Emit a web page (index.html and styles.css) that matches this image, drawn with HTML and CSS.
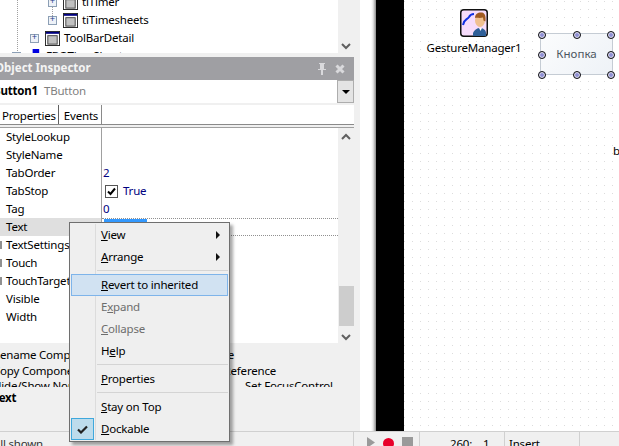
FILE: index.html
```html
<!DOCTYPE html>
<html lang="en">
<head>
<meta charset="utf-8">
<title>Object Inspector</title>
<link rel="stylesheet" href="styles.css">
</head>
<body>
<div class="app">
  <div class="workspace">
    <aside class="left">
      <section class="tree-pane">
        <div class="tree">
          <span class="guide guide-a"></span>
          <span class="guide guide-b"></span>
          <div class="tree-row lvl3"><span class="exp">+</span><svg class="win" viewBox="0 0 16 16"><use href="#win"/></svg><span>tiTimer</span></div>
          <div class="tree-row lvl3"><span class="exp">+</span><svg class="win" viewBox="0 0 16 16"><use href="#win"/></svg><span>tiTimesheets</span></div>
          <div class="tree-row lvl2"><span class="exp">+</span><svg class="win" viewBox="0 0 16 16"><use href="#win"/></svg><span>ToolBarDetail</span></div>
          <div class="tree-row lvl1"><span class="exp">-</span><svg class="win" viewBox="0 0 16 16"><rect x="6" y="0" width="7" height="8" fill="#0000e0"/><rect x="3" y="8" width="12" height="7" fill="#808080"/></svg><span>FBOTimeSheet</span></div>
        </div>
        <div class="scroll">
          <span class="spacer"></span>
          <svg class="chev" viewBox="0 0 10 7"><path d="M1 1l4 4 4-4" fill="none" stroke="#606060" stroke-width="2"/></svg>
        </div>
      </section>

      <header class="title">
        <span class="title-text">Object Inspector</span>
        <svg class="pin" viewBox="0 0 10 12"><path d="M2 0h6v1H7v5h2v1H6v5H4V7H1V6h2V1H2z" fill="#d9d9dc"/></svg>
        <svg class="close" viewBox="0 0 10 10"><path d="M1.5 1.5l7 7M8.5 1.5l-7 7" stroke="#d9d9dc" stroke-width="3"/></svg>
      </header>

      <div class="combo">
        <span class="combo-name">Button1</span>
        <span class="combo-type">TButton</span>
        <span class="combo-btn"><i class="tri"></i></span>
      </div>

      <nav class="tabs">
        <span class="tab active">Properties</span>
        <span class="tab">Events</span>
      </nav>

      <section class="grid">
        <div class="props">
          <div class="prop"><span class="name">StyleLookup</span><span class="value"></span></div>
          <div class="prop"><span class="name">StyleName</span><span class="value"></span></div>
          <div class="prop"><span class="name">TabOrder</span><span class="value">2</span></div>
          <div class="prop"><span class="name">TabStop</span><span class="value"><i class="check"><svg viewBox="0 0 11 11"><path d="M2 5.5l2.5 2.5L9 2.5" fill="none" stroke="#000" stroke-width="2"/></svg></i>True</span></div>
          <div class="prop"><span class="name">Tag</span><span class="value">0</span></div>
          <div class="prop current"><span class="name">Text</span><span class="value"><i class="sel">Button1</i></span></div>
          <div class="prop more"><span class="name">TextSettings</span><span class="value"></span></div>
          <div class="prop more"><span class="name">Touch</span><span class="value"></span></div>
          <div class="prop more"><span class="name">TouchTargetExpansion</span><span class="value"></span></div>
          <div class="prop"><span class="name">Visible</span><span class="value"></span></div>
          <div class="prop"><span class="name">Width</span><span class="value"></span></div>
        </div>
        <div class="scroll grid-scroll">
          <svg class="chev" viewBox="0 0 10 7"><path d="M1 6l4-4 4 4" fill="none" stroke="#606060" stroke-width="2"/></svg>
          <span class="spacer"></span>
          <span class="thumb"></span>
          <svg class="chev chev-down" viewBox="0 0 10 7"><path d="M1 1l4 4 4-4" fill="none" stroke="#606060" stroke-width="2"/></svg>
        </div>
      </section>

      <section class="verbs">
        <div class="verb-row"><span class="verb-a">Rename Component</span><span class="verb-b">Edit Custom Style</span></div>
        <div class="verb-row"><span class="verb-a">Copy Component</span><span class="verb-c">Add Component Reference</span></div>
        <div class="verb-row verb-last"><span class="verb-a">Hide/Show Nonvisual</span><span class="verb-d">Set FocusControl</span></div>
        <div class="verb-prop">Text</div>
      </section>
    </aside>

    <main class="designer">
      <div class="shade"></div>
      <div class="black"></div>
      <div class="form">
        <div class="comp">
          <svg class="comp-icon" viewBox="0 0 28 28">
            <rect x="0.75" y="0.75" width="26.5" height="26.5" rx="3" fill="#f6dcfb" stroke="#111" stroke-width="1.5"/>
            <path d="M3 16c1-6 4-5 6-8 1-2 3-3 5-3" fill="none" stroke="#1030e0" stroke-width="2"/>
            <path d="M13 27v-3c1-3 4-5 7-5s6 2 6 5v3z" fill="#2f5f98"/>
            <path d="M19 19l1.500 3 1.500-3z" fill="#fff"/>
            <ellipse cx="20" cy="11.500" rx="5" ry="6.500" fill="#f0c090"/>
            <path d="M15 9c0-5 4-6 7-5.500s4 4 3.500 9l-2-1-.5-3c-3 1-6 0-8 .5z" fill="#a05a20"/>
          </svg>
          <span class="comp-label">GestureManager1</span>
        </div>
        <div class="btn">Кнопка
          <i class="h h1"></i><i class="h h2"></i><i class="h h3"></i><i class="h h4"></i>
          <i class="h h5"></i><i class="h h6"></i><i class="h h7"></i><i class="h h8"></i>
        </div>
        <span class="edge-b">b</span>
      </div>
    </main>
  </div>

  <footer class="status">
    <div class="st st-shown">All shown</div>
    <div class="st st-run">
      <svg class="run" viewBox="0 0 8 11"><path d="M0 0l8 5.500L0 11z" fill="#9a9a9a"/></svg>
      <svg class="rec" viewBox="0 0 11 11"><circle cx="5.500" cy="5.500" r="5.500" fill="#e8002a"/></svg>
      <i class="stop"></i>
    </div>
    <div class="st st-pos"><span>260:</span><span>1</span></div>
    <div class="st st-mode">Insert</div>
    <div class="st st-end"></div>
  </footer>
</div>

<div class="menu">
  <div class="mi"><span class="ml"><u>V</u>iew</span><i class="arrow"></i></div>
  <div class="mi"><span class="ml"><u>A</u>rrange</span><i class="arrow"></i></div>
  <div class="ms"></div>
  <div class="mi hot"><span class="ml"><u>R</u>evert to inherited</span></div>
  <div class="mi off"><span class="ml">E<u>x</u>pand</span></div>
  <div class="mi off"><span class="ml"><u>C</u>ollapse</span></div>
  <div class="mi"><span class="ml">H<u>e</u>lp</span></div>
  <div class="ms"></div>
  <div class="mi"><span class="ml"><u>P</u>roperties</span></div>
  <div class="ms"></div>
  <div class="mi"><span class="ml"><u>S</u>tay on Top</span></div>
  <div class="mi"><span class="tick"><svg viewBox="0 0 11 9"><path d="M1 4.500l3 3 6-6" fill="none" stroke="#222" stroke-width="2.200"/></svg></span><span class="ml"><u>D</u>ockable</span></div>
</div>

<svg class="defs" width="0" height="0">
  <defs>
    <g id="win">
      <rect x="0.500" y="0.500" width="15" height="15" fill="#fff" stroke="#222"/>
      <rect x="1" y="1" width="14" height="2" fill="#000080"/>
      <rect x="3" y="5" width="10" height="9" fill="#c0c0c0" stroke="#404040"/>
    </g>
  </defs>
</svg>
</body>
</html>
```
FILE: styles.css
```css
* { box-sizing: border-box; }
html, body { margin: 0; padding: 0; height: 100%; overflow: hidden; }
body { font: 11.5px/16px "Noto Sans", "Open Sans", sans-serif; letter-spacing: -0.2px; color: #000; background: #f0f0f0; position: relative; }
i { font-style: normal; }

.app { width: 619px; height: 446px; display: flex; flex-direction: column; overflow: hidden; }
.workspace { flex: 1; display: flex; min-height: 0; }
.left { width: 360px; flex: none; padding-right: 6px; display: flex; flex-direction: column; background: #f0f0f0; min-height: 0; }

/* tree */
.tree-pane { height: 53px; flex: none; display: flex; overflow: hidden; }
.tree { position: relative; width: 338px; background: #fff; }
.tree-row { height: 18px; display: flex; align-items: center; white-space: nowrap; position: relative; top: -7px; }
.lvl3 { padding-left: 48px; }
.lvl2 { padding-left: 30px; }
.lvl1 { padding-left: 12px; }
.exp { width: 9px; height: 9px; flex: none; border: 1px solid #8c9fb5; background: #eef2f8; color: #24418a; font: 9px/7px "Liberation Mono", monospace; letter-spacing: 0; text-align: center; }
.win { width: 15px; height: 15px; margin: 0 4px 0 6px; flex: none; }
.guide { position: absolute; width: 0; border-left: 1px dotted #a0a0a0; }
.guide-a { left: 17px; top: 0; height: 53px; }
.guide-b { left: 52px; top: 0; height: 18px; }

.scroll { width: 16px; flex: none; display: flex; flex-direction: column; align-items: center; background: #f0f0f0; }
.spacer { flex: 1; }
.chev { width: 10px; height: 7px; flex: none; margin: 5px 0 3px; }

/* title */
.title { height: 23px; margin-top: 4px; flex: none; background: #9f9fa3; display: flex; align-items: center; padding-right: 9px; overflow: hidden; }
.title-text { margin-left: -5px; flex: 1; color: #f4f4f4; font-weight: 700; white-space: nowrap; line-height: 14px; letter-spacing: 0; margin-bottom: 2px; }
.pin { width: 10px; height: 12px; margin-right: 8px; }
.close { width: 10px; height: 10px; }

/* combo */
.combo { height: 23px; flex: none; background: #fff; display: flex; align-items: center; overflow: hidden; }
.combo-name { margin-left: -7px; font-weight: 700; margin-bottom: 2px; }
.combo-type { margin-left: 6px; color: #808080; flex: 1; margin-bottom: 2px; }
.combo-btn { width: 17px; height: 23px; background: #e4e4e4; border: 1px solid #adadad; display: flex; align-items: center; justify-content: center; }
.tri { width: 0; height: 0; border: 4px solid transparent; border-top: 4px solid #000; border-bottom: 0; }

/* tabs */
.tabs { height: 20px; margin: 2px 0; flex: none; background: #fff; border-bottom: 1px solid #8a8a8a; display: flex; }
.tab { padding: 0 3px 0 5px; height: 19px; line-height: 22px; border-right: 1px solid #8a8a8a; }
.tab.active { padding-left: 2px; padding-right: 2px; border-right: 1px solid #606060; }

/* grid */
.grid { height: 216px; flex: none; display: flex; border-top: 1px solid #a0a0a0; }
.props { width: 338px; background: #fff; overflow: hidden; }
.prop { height: 18px; display: flex; white-space: nowrap; }
.name { width: 102px; flex: none; padding-left: 6px; line-height: 18px; border-right: 1px solid #a0a0a0; overflow: hidden; position: relative; }
.value { flex: 1; padding-left: 1px; line-height: 18px; color: #000080; }
.current .name { background: #dfdfdf; }
.current .value { border-top: 1px dotted #909090; border-bottom: 1px dotted #909090; line-height: 16px; }
.sel { display: inline-block; margin-left: 1px; background: #3399ff; color: #fff; width: 43px; height: 16px; line-height: 16px; vertical-align: top; }
.more .name::before { content: ""; position: absolute; left: 0; top: 5px; width: 2px; height: 8px; background: #909090; }
.check { display: inline-flex; width: 13px; height: 13px; border: 1px solid #555; margin: 0 5px 0 2px; vertical-align: -2px; background: #fff; }
.check svg { width: 11px; height: 11px; }
.grid-scroll { padding-bottom: 2px; }
.thumb { width: 15px; height: 40px; background: #cdcdcd; flex: none; }
.chev-down { margin: 5px 0 0; }
.grid-scroll .chev-down { margin-top: 8px; }

/* verbs */
.verbs { flex: 1; padding-top: 4px; overflow: hidden; }
.verb-row { height: 15.500px; line-height: 16px; display: flex; white-space: nowrap; }
.verb-a { margin-left: -7px; width: 120px; flex: none; overflow: hidden; }
.verb-b { width: 121px; text-align: right; flex: none; }
.verb-c { width: 163px; text-align: right; flex: none; }
.verb-d { margin-left: 132px; flex: none; }
.verb-last { overflow: hidden; height: 9px; }
.verb-prop { margin: 3px 0 0 -7px; font-weight: 700; }

/* designer */
.designer { flex: 1; display: flex; background: #fff; min-width: 0; }
.shade { width: 16px; flex: none; background: linear-gradient(to right, #fff 0, #fff 11px, #e8e8e8 13px, #8a8a8a 16px); }
.black { width: 28px; flex: none; background: #000; }
.form {
  flex: 1; position: relative; overflow: hidden; background-color: #fff;
  background-image: linear-gradient(to right, #fff 7px, transparent 7px), linear-gradient(#fff 7px, #dcdcdc 7px);
  background-size: 8px 8px;
  background-position: 1px 2px;
}
.comp { position: absolute; left: 20px; top: 9px; width: 100px; display: flex; flex-direction: column; align-items: center; }
.comp-icon { width: 28px; height: 28px; }
.comp-label { margin-top: 3px; white-space: nowrap; }
.btn { position: absolute; left: 136px; top: 33px; width: 73px; height: 42px; background: linear-gradient(135deg, #fbfcfd, #eef2f7); border: 1px solid #c5ccd4; color: #4c5560; text-align: center; line-height: 40px; letter-spacing: 0; }
.h { position: absolute; width: 8px; height: 8px; border-radius: 50%; background: #8f8fd4; border: 1px solid #111; box-shadow: inset 0 0 0 1px #e8e8f4; }
.h1, .h4, .h6 { left: -3px; }
.h2, .h7 { left: 32px; }
.h3, .h5, .h8 { left: 66px; }
.h1, .h2, .h3 { top: -3px; }
.h4, .h5 { top: 17px; }
.h6, .h7, .h8 { top: 37px; }
.edge-b { position: absolute; left: 209px; top: 143px; }

/* status */
.status { height: 15px; flex: none; display: flex; border-top: 1px solid #d0d0d0; background: #f0f0f0; overflow: hidden; }
.st { height: 14px; border-right: 1px solid #d0d0d0; line-height: 23px; white-space: nowrap; overflow: hidden; }
.st-shown { width: 354px; color: #333; text-indent: -7px; }
.st-run { width: 66px; display: flex; align-items: flex-start; padding: 5px 0 0 13px; }
.run { width: 8px; height: 11px; flex: none; margin-right: 8px; }
.rec { width: 11px; height: 11px; flex: none; margin: 1px 8px 0 0; }
.stop { width: 11px; height: 11px; flex: none; background: #9a9a9a; }
.st-pos { width: 85px; padding-left: 30px; display: flex; gap: 11px; }
.st-mode { width: 75px; padding-left: 4px; }
.st-end { flex: 1; border-right: 0; }

/* menu */
.menu { position: absolute; left: 69px; top: 222px; width: 161px; height: 220px; padding: 1px; background: #efefef; border: 1px solid #6f6f6f; box-shadow: 3px 3px 3px rgba(0,0,0,.35); }
.menu::before { content: ""; position: absolute; left: 25px; top: 1px; bottom: 1px; width: 1px; background: #dcdcdc; }
.mi { height: 22px; display: flex; align-items: center; position: relative; padding-left: 30px; }
.ml { white-space: nowrap; }
.hot { background: #d1e2f2; box-shadow: inset 0 0 0 1px #7eb4ea; }
.off { color: #6d6d6d; }
.ms { height: 6px; margin: 0 0 0 26px; padding-top: 2px; }
.ms::before { content: ""; display: block; height: 1px; background: #d4d4d4; }
.arrow { position: absolute; left: 145px; top: 7px; width: 0; height: 0; border: 4px solid transparent; border-left: 4px solid #111; border-right: 0; }
.tick { position: absolute; left: 0; top: 0; width: 23px; height: 22px; background: #bddcec; border: 1px solid #3fa8dc; display: flex; align-items: center; justify-content: center; }
.tick svg { width: 11px; height: 9px; }
.defs { position: absolute; }
```
